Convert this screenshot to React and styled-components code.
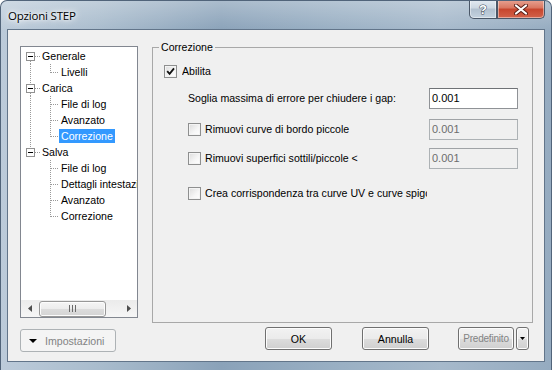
import React from 'react';
import styled, { createGlobalStyle } from 'styled-components';

const GlobalStyle = createGlobalStyle`
  html, body {
    margin: 0;
    padding: 0;
    background: #fff;
  }
  body {
    font-family: "Liberation Sans", Arial, sans-serif;
    font-size: 10.6px;
    color: #000;
  }
`;

const Window = styled.div`
  width: 552px;
  height: 370px;
  box-sizing: border-box;
  display: flex;
  flex-direction: column;
  border: 1px solid #51647a;
  border-bottom: none;
  border-radius: 7px 7px 0 0;
  overflow: hidden;
  background:
    linear-gradient(180deg, rgba(255, 255, 255, 0.28) 0%, rgba(255, 255, 255, 0) 30px),
    linear-gradient(90deg, #bccbda 0%, #a9bccd 18%, #8aa2b9 40%, #9ab0c4 62%, #a6b9cb 80%, #95abc0 100%);
`;

const TitleBar = styled.div`
  height: 28px;
  display: flex;
  align-items: flex-start;
  padding-left: 7px;
  padding-right: 6px;
`;

const Caption = styled.div`
  flex: 1;
  align-self: center;
  margin-top: 1px;
  font-family: "Open Sans", "Liberation Sans", sans-serif;
  font-size: 11.5px;
  letter-spacing: -0.2px;
  color: #000;
  text-shadow: 0 0 6px #fff, 0 0 10px #fff, 0 0 3px rgba(255, 255, 255, 0.9);
`;

const CaptionButtons = styled.div`
  display: flex;
  margin-top: -1px;
`;

const CaptionButton = styled.div`
  width: ${p => p.$w}px;
  height: 19px;
  box-sizing: border-box;
  display: flex;
  align-items: center;
  justify-content: center;
  border: 1px solid #4a5768;
  border-top: none;
  box-shadow: inset 0 0 0 1px rgba(255, 255, 255, 0.45);
  border-radius: ${p => p.$radius};
  background: ${p => p.$bg};
`;

const Client = styled.div`
  flex: 1;
  margin: 0 6px 8px 6px;
  border: 1px solid #62758a;
  background: #f0f0f0;
  display: flex;
  flex-direction: column;
  padding: 10px 11px 0 12px;
`;

const MainRow = styled.div`
  display: flex;
  gap: 14px;
  height: 283px;
`;

const TreePanel = styled.div`
  width: 118px;
  height: 272px;
  margin-top: 6px;
  box-sizing: border-box;
  border: 1px solid #828790;
  background: #fff;
  display: flex;
  flex-direction: column;
  overflow: hidden;
`;

const TreeList = styled.div`
  flex: 1;
  padding-top: 1px;
  overflow: hidden;
`;

const TreeRow = styled.div`
  height: 16px;
  display: flex;
  align-items: center;
  white-space: nowrap;
`;

const TreeLabel = styled.span`
  line-height: 14px;
  padding: 0 2px;
  color: ${p => (p.$selected ? '#fff' : '#000')};
  background: ${p => (p.$selected ? '#3399ff' : 'transparent')};
`;

const ScrollBar = styled.div`
  height: 17px;
  display: flex;
  background: linear-gradient(180deg, #ebebeb 0%, #f6f6f6 100%);
`;

const ScrollArrow = styled.div`
  width: 17px;
  height: 17px;
  display: flex;
  align-items: center;
  justify-content: center;
`;

const ScrollTrack = styled.div`
  flex: 1;
  display: flex;
  align-items: center;
`;

const ScrollThumb = styled.div`
  width: 67px;
  height: 16px;
  margin-left: 1px;
  box-sizing: border-box;
  border: 1px solid #979797;
  border-radius: 3px;
  background: linear-gradient(180deg, #f5f5f5 0%, #ececec 50%, #dcdcdc 51%, #d4d4d4 100%);
  box-shadow: inset 0 0 0 1px #fcfcfc;
  display: flex;
  align-items: center;
  justify-content: center;
`;

const Group = styled.fieldset`
  width: 381px;
  height: 283px;
  box-sizing: border-box;
  margin: 0;
  padding: 6px 14px 0 6px;
  border: 1px solid #a8a8a8;
  min-width: 0;
`;

const Legend = styled.legend`
  padding: 0 2px;
  line-height: 14px;
`;

const Row = styled.div`
  height: 22px;
  display: flex;
  align-items: center;
  gap: 4px;
  margin-top: ${p => p.$top || 0}px;
  padding-left: ${p => p.$indent || 0}px;
  margin-right: ${p => p.$clip || 0}px;
`;

const RowLabel = styled.span`
  flex: 1;
  overflow: hidden;
  white-space: nowrap;
  margin-left: ${p => p.$gap || 0}px;
`;

const Box = styled.span`
  width: 13px;
  height: 13px;
  flex: none;
  box-sizing: border-box;
  border: 1px solid #8e8f8f;
  background: linear-gradient(135deg, #dcdcdc 0%, #f6f6f6 60%, #fff 100%);
  box-shadow: inset 0 0 0 1px #f4f4f4;
  display: flex;
  align-items: center;
  justify-content: center;
`;

const Field = styled.div`
  width: 89px;
  height: 21px;
  flex: none;
  box-sizing: border-box;
  border: 1px solid ${p => (p.$disabled ? '#adb2b5' : '#8f9296')};
  border-top-color: ${p => (p.$disabled ? '#a0a3a6' : '#6f7276')};
  background: ${p => (p.$disabled ? '#f0f0f0' : '#fff')};
  color: ${p => (p.$disabled ? '#6d6d6d' : '#000')};
  padding: 1px 0 0 2px;
  line-height: 16px;
  font-size: 11px;
`;

const Footer = styled.div`
  display: flex;
  align-items: flex-start;
  margin-top: 4px;
  margin-right: 4px;
`;

const Button = styled.div`
  width: ${p => p.$w}px;
  height: 23px;
  flex: none;
  box-sizing: border-box;
  margin-left: ${p => p.$gap || 0}px;
  margin-top: ${p => p.$top || 0}px;
  border: 1px solid ${p => (p.$flat ? '#adb2b5' : '#707070')};
  border-radius: 3px;
  background: ${p =>
    p.$flat
      ? '#f4f4f4'
      : 'linear-gradient(180deg, #f2f2f2 0%, #ebebeb 50%, #dddddd 51%, #cfcfcf 100%)'};
  box-shadow: inset 0 0 0 1px ${p => (p.$flat ? '#f4f4f4' : '#fcfcfc')};
  color: ${p => (p.$muted ? '#838383' : '#000')};
  display: flex;
  align-items: center;
  justify-content: ${p => (p.$start ? 'flex-start' : 'center')};
  gap: 8px;
  padding-left: ${p => (p.$start ? 8 : 0)}px;
  line-height: 14px;
  font-size: ${p => (p.$small ? 10 : 10.6)}px;
  letter-spacing: ${p => (p.$small ? -0.2 : 0)}px;
  white-space: nowrap;
  overflow: hidden;
`;

const Spacer = styled.div`
  flex: 1;
`;

const tree = [
  { label: 'Generale', children: ['Livelli'] },
  { label: 'Carica', children: ['File di log', 'Avanzato', 'Correzione'], selected: 2 },
  { label: 'Salva', children: ['File di log', 'Dettagli intestazioni', 'Avanzato', 'Correzione'] },
];

const dot = { stroke: '#9a9a9a', strokeWidth: 1, strokeDasharray: '1 1' };

function RootGutter({ first, last }) {
  return (
    <svg width="19" height="16" style={{ flex: 'none' }}>
      {!first && <line x1="9.5" y1="0" x2="9.5" y2="4" {...dot} />}
      {!last && <line x1="9.5" y1="13" x2="9.5" y2="16" {...dot} />}
      <line x1="14" y1="8.5" x2="19" y2="8.5" {...dot} />
      <rect x="5.5" y="4.5" width="8" height="8" fill="#fff" stroke="#919191" />
      <line x1="7" y1="8.5" x2="12" y2="8.5" stroke="#000" />
    </svg>
  );
}

function ChildGutter({ parentLast, last }) {
  return (
    <svg width="38" height="16" style={{ flex: 'none' }}>
      {!parentLast && <line x1="9.5" y1="0" x2="9.5" y2="16" {...dot} />}
      <line x1="29.5" y1="0" x2="29.5" y2={last ? 9 : 16} {...dot} />
      <line x1="30" y1="8.5" x2="38" y2="8.5" {...dot} />
    </svg>
  );
}

function Tree() {
  return (
    <TreeList>
      {tree.map((node, r) => {
        const rootLast = r === tree.length - 1;
        return (
          <React.Fragment key={node.label}>
            <TreeRow>
              <RootGutter first={r === 0} last={rootLast} />
              <TreeLabel>{node.label}</TreeLabel>
            </TreeRow>
            {node.children.map((c, i) => (
              <TreeRow key={c + i}>
                <ChildGutter parentLast={rootLast} last={i === node.children.length - 1} />
                <TreeLabel $selected={node.selected === i}>{c}</TreeLabel>
              </TreeRow>
            ))}
          </React.Fragment>
        );
      })}
    </TreeList>
  );
}

function HScroll() {
  return (
    <ScrollBar>
      <ScrollArrow>
        <svg width="4" height="7"><path d="M4 0 L0 3.5 L4 7 Z" fill="#4d4d4d" /></svg>
      </ScrollArrow>
      <ScrollTrack>
        <ScrollThumb>
          <svg width="7" height="7">
            <path d="M0.5 0 V7 M3.5 0 V7 M6.5 0 V7" stroke="#6a6a6a" />
          </svg>
        </ScrollThumb>
      </ScrollTrack>
      <ScrollArrow>
        <svg width="4" height="7"><path d="M0 0 L4 3.5 L0 7 Z" fill="#4d4d4d" /></svg>
      </ScrollArrow>
    </ScrollBar>
  );
}

function Check({ checked }) {
  return (
    <Box>
      {checked && (
        <svg width="9" height="9">
          <path d="M1.2 4.2 L3.6 6.8 L8 1.4" fill="none" stroke="#111" strokeWidth="1.8" />
        </svg>
      )}
    </Box>
  );
}

function DownTriangle({ w = 8, h = 4 }) {
  return (
    <svg width={w} height={h} style={{ flex: 'none' }}>
      <path d={`M0 0 L${w} 0 L${w / 2} ${h} Z`} fill="#000" />
    </svg>
  );
}

export default function App() {
  return (
    <>
      <GlobalStyle />
      <Window>
        <TitleBar>
          <Caption>Opzioni STEP</Caption>
          <CaptionButtons>
            <CaptionButton
              $w={28}
              $radius="0 0 0 5px"
              $bg="linear-gradient(180deg, #e4ebf2 0%, #ccd7e2 45%, #b1c0cf 50%, #c4d2df 100%)"
            >
              <svg width="10" height="13">
                <text
                  x="5"
                  y="11"
                  textAnchor="middle"
                  fontFamily="Liberation Sans, sans-serif"
                  fontWeight="bold"
                  fontSize="13"
                  fill="#fff"
                  stroke="#3f4d5c"
                  strokeWidth="1"
                  paintOrder="stroke"
                >
                  ?
                </text>
              </svg>
            </CaptionButton>
            <CaptionButton
              $w={48}
              $radius="0 0 5px 0"
              $bg="linear-gradient(180deg, #e8a393 0%, #d9755f 45%, #c7452d 50%, #d2624a 100%)"
            >
              <svg width="14" height="11">
                <path d="M2 1.5 L12 9.5 M12 1.5 L2 9.5" stroke="#5a1f18" strokeWidth="4" strokeLinecap="round" />
                <path d="M2 1.5 L12 9.5 M12 1.5 L2 9.5" stroke="#fff" strokeWidth="2.2" strokeLinecap="round" />
              </svg>
            </CaptionButton>
          </CaptionButtons>
        </TitleBar>

        <Client>
          <MainRow>
            <TreePanel>
              <Tree />
              <HScroll />
            </TreePanel>

            <Group>
              <Legend>Correzione</Legend>
              <Row $top={0} $indent={5}>
                <Check checked />
                <RowLabel $gap={1}>Abilita</RowLabel>
              </Row>
              <Row $top={5} $indent={29}>
                <RowLabel>Soglia massima di errore per chiudere i gap:</RowLabel>
                <Field>0.001</Field>
              </Row>
              <Row $top={9} $indent={29}>
                <Check />
                <RowLabel>Rimuovi curve di bordo piccole</RowLabel>
                <Field $disabled>0.001</Field>
              </Row>
              <Row $top={7} $indent={29}>
                <Check />
                <RowLabel>Rimuovi superfici sottili/piccole &lt;</RowLabel>
                <Field $disabled>0.001</Field>
              </Row>
              <Row $top={13} $indent={29} $clip={91}>
                <Check />
                <RowLabel>Crea corrispondenza tra curve UV e curve spigolo</RowLabel>
              </Row>
            </Group>
          </MainRow>

          <Footer>
            <Button $w={96} $top={2} $flat $muted $start>
              <DownTriangle />
              Impostazioni
            </Button>
            <Spacer />
            <Button $w={67}>OK</Button>
            <Button $w={67} $gap={30}>Annulla</Button>
            <Button $w={56} $gap={29} $muted $small>Predefinito</Button>
            <Button $w={13} $gap={2}>
              <DownTriangle w={5} h={3} />
            </Button>
          </Footer>
        </Client>
      </Window>
    </>
  );
}
